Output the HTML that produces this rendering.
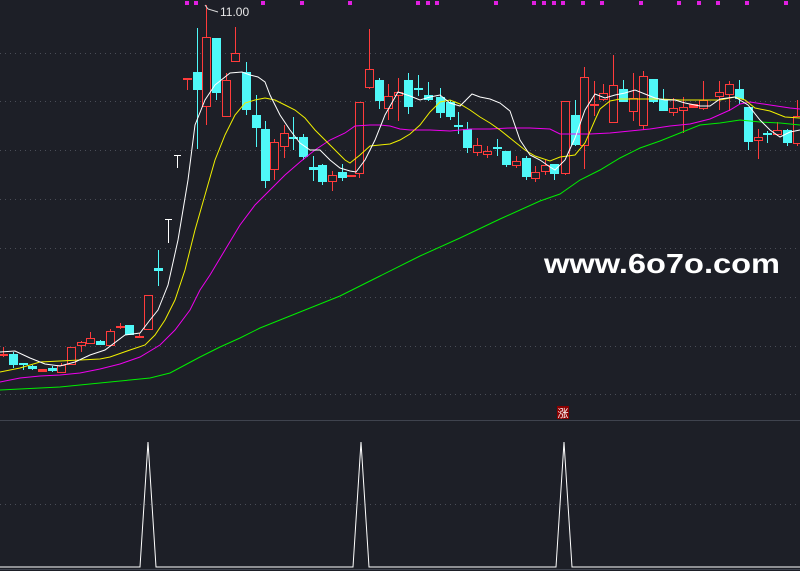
<!DOCTYPE html>
<html><head><meta charset="utf-8"><style>
html,body{margin:0;padding:0;background:#1d1f27;width:800px;height:571px;overflow:hidden}
svg{display:block}
</style></head><body>
<svg id="s" width="800" height="571" viewBox="0 0 800 571" xmlns="http://www.w3.org/2000/svg" shape-rendering="crispEdges">
<rect width="800" height="571" fill="#1d1f27"/>
<g stroke="#4a4d57" stroke-width="1" stroke-dasharray="1,4">
<line x1="0" y1="53.5" x2="800" y2="53.5"/><line x1="0" y1="101.5" x2="800" y2="101.5"/>
<line x1="0" y1="150.5" x2="800" y2="150.5"/><line x1="0" y1="199.5" x2="800" y2="199.5"/>
<line x1="0" y1="248.5" x2="800" y2="248.5"/><line x1="0" y1="297.5" x2="800" y2="297.5"/>
<line x1="0" y1="346.5" x2="800" y2="346.5"/><line x1="0" y1="394.5" x2="800" y2="394.5"/>
<line x1="0" y1="504.5" x2="800" y2="504.5"/>
</g>
<line x1="0" y1="420.5" x2="800" y2="420.5" stroke="#3f434e"/>
<line x1="0" y1="569.5" x2="800" y2="569.5" stroke="#3f434e"/>
<g id="c"></g>
<g fill="none" stroke-width="1" shape-rendering="auto">
<polyline stroke="#00ee00" points="0,390 20,389 60,387 80,385 100,383 130,380 150,378 170,373 185,365 200,357 220,347 240,338 260,328 300,312 340,296 380,276 420,256 460,238 500,219 540,201 560,194 580,180 600,170 620,158 640,148 660,141 680,133 700,125 720,123 740,120 760,122 780,123 800,125"/>
<polyline stroke="#ee00ee" points="0,382 20,378 40,376 60,375 80,373 100,369 120,364 140,357 160,345 175,330 190,310 200,290 210,275 225,250 240,225 255,205 270,190 285,175 300,162 315,150 330,140 345,133 355,126 370,125 380,125 390,126 400,129 410,130 430,130 450,131 470,129 490,129 510,128 530,128 550,129 560,134 570,134 590,134 610,133 630,131 650,129 670,126 690,124 710,119 730,110 740,104 750,102 770,105 790,108 800,109"/>
<polyline stroke="#f0f000" points="0,372 20,368 40,362 60,361 80,360 100,359 110,357 130,350 145,345 155,335 165,320 175,300 185,270 195,230 205,195 215,160 225,135 235,115 245,103 255,100 265,98 275,100 285,105 295,110 305,118 315,130 325,140 335,150 345,160 350,163 360,155 370,146 380,145 390,144 400,140 410,134 420,125 430,112 440,102 450,100 460,104 470,110 480,117 490,123 500,130 515,142 525,150 535,156 550,161 560,157 575,155 585,143 595,120 600,109 610,101 620,99 640,99 660,99 680,100 700,100 720,100 735,97 745,100 755,108 770,111 785,117 800,118"/>
<polyline stroke="#ffffff" points="0,352 15,351 30,358 45,364 60,366 75,362 90,355 105,350 125,335 140,333 150,320 158,310 168,285 178,240 188,180 195,125 205,100 215,85 230,73 242,72 250,75 258,77 265,82 270,95 280,115 290,130 300,143 310,150 320,150 330,160 340,168 350,171 356,172 365,160 375,140 385,115 398,92 410,96 420,100 430,97 440,95 450,103 460,106 472,94 480,97 490,99 500,103 510,111 520,140 530,155 540,160 550,167 555,170 565,160 575,138 585,110 595,94 605,98 615,95 625,93 635,90 645,94 655,98 665,100 675,100 685,103 700,106 710,106 720,99 735,97 748,105 760,120 770,130 780,137 790,132 800,130"/>
</g>
<g fill="#e020e0" id="d"></g>
<g stroke="#fff" fill="none" shape-rendering="auto">
<polyline points="0,567 140,567 148,442 156,567 353,567 361,442 369,567 556,567 564,442 572,567 800,567"/>
</g>
<polyline points="218,12 208,9 205,5" stroke="#ddd" fill="none" shape-rendering="auto"/>
<text x="220" y="16" font-family="Liberation Sans, sans-serif" font-size="12" fill="#e8e8e8">11.00</text>
<text x="544" y="273" font-family="Liberation Sans, sans-serif" font-weight="bold" font-size="28" fill="#ffffff" textLength="236" lengthAdjust="spacingAndGlyphs">www.6o7o.com</text>
<rect x="557" y="406" width="12" height="13" fill="#8b0000"/>
<text x="563" y="417" text-anchor="middle" font-family="Liberation Sans, Noto Sans CJK SC, sans-serif" font-size="11" fill="#fff">涨</text>
</svg>
<script>
var R='#ff3b3b',C='#4ff8f8';
var k=[
[3,354,356,347,357,R,1],[13,354,365,352,368,C,1],[23,363,365,363,370,C,1],[32,366,369,365,370,C,1],[42,369,372,369,372,R,1],[52,368,371,366,372,C,1],[61,365,373,363,373,R,0],[71,347,365,347,365,R,0],[81,342,346,341,352,R,0],[90,338,344,332,344,R,0],[100,341,345,340,345,C,1],[110,331,346,329,346,R,0],[120,326,328,323,329,R,1],[129,325,335,325,335,C,1],[139,336,338,333,338,R,1],[148,295,330,295,330,R,0],[158,268,271,250,286,C,1],
[187,78,80,78,90,R,0],[197,72,90,28,149,C,1],[206,37,107,5,125,R,0],[216,38,93,38,100,C,1],[226,80,117,73,117,R,0],[235,53,62,27,62,R,0],[246,72,110,62,115,C,1],[256,115,128,95,147,C,1],[265,129,181,121,188,C,1],[274,142,170,139,180,R,0],[284,133,147,125,158,R,0],[293,137,139,117,150,C,1],[303,137,157,134,160,C,1],[313,167,170,156,181,C,1],[322,165,182,164,185,C,1],[332,175,182,171,191,R,0],[342,172,178,164,181,C,1],[351,175,177,175,177,R,1],[359,102,174,102,178,R,0],[369,69,88,29,89,R,0],[379,80,101,78,109,C,1],[388,96,109,84,120,R,0],[398,92,96,78,121,R,0],[408,80,107,73,114,C,1],[418,88,90,75,96,C,1],[428,95,100,82,101,C,1],[440,97,113,88,118,C,1],
[450,102,117,100,120,C,1],[458,125,127,112,134,C,1],[467,129,148,122,153,C,1],[477,145,153,138,156,R,0],[487,151,155,146,158,R,0],[497,147,149,139,156,C,1],[506,151,165,151,167,C,1],[516,161,166,156,168,R,0],[526,158,177,156,180,C,1],[535,172,179,166,182,R,0],[545,165,172,160,175,R,0],[554,164,174,164,180,C,1],[565,101,174,101,175,R,0],[575,115,145,100,146,C,1],[584,77,146,67,169,R,0],[594,104,106,81,116,R,1],[603,93,100,84,101,R,0],[613,85,123,55,123,R,0],[623,89,102,80,102,C,1],[633,98,112,73,121,R,0],[643,76,126,71,130,R,0],[653,79,102,79,103,C,1],[663,99,111,89,111,C,1],[673,108,113,98,116,R,0],[683,107,111,97,133,R,0],[693,104,108,104,108,R,1],[703,100,109,81,110,R,0],[719,92,97,81,110,R,0],[729,84,95,81,111,R,0],[739,89,99,80,104,C,1],[748,107,142,107,150,C,1],[758,137,141,129,159,R,0],[767,133,135,131,143,C,1],[777,130,135,122,136,R,0],[787,130,143,129,146,C,1],[797,116,144,100,146,R,0]
];
var g=document.getElementById('c'),h='';
k.forEach(function(a){var x=a[0],c=a[5];
h+='<rect x="'+x+'" y="'+a[3]+'" width="1" height="'+(a[4]-a[3])+'" fill="'+c+'"/>';
var hgt=Math.max(a[2]-a[1],2);
h+='<rect x="'+(x-4)+'" y="'+a[1]+'" width="9" height="'+hgt+'" fill="'+c+'"/>';
if(!a[6]&&hgt>2) h+='<rect x="'+(x-3)+'" y="'+(a[1]+1)+'" width="7" height="'+(hgt-2)+'" fill="#1d1f27"/>';
});
h+='<rect x="168" y="219" width="1" height="24" fill="#fff"/><rect x="165" y="219" width="7" height="1" fill="#fff"/>';
h+='<rect x="177" y="155" width="1" height="13" fill="#fff"/><rect x="174" y="155" width="7" height="1" fill="#fff"/>';
g.innerHTML=h;
var d=[187,196,263,302,350,418,428,437,496,534,544,554,563,583,602,641,679,699,718,747,786],s='';
d.forEach(function(x){s+='<rect x="'+(x-2)+'" y="1" width="4" height="4"/>';});
document.getElementById('d').innerHTML=s;
</script>
</body></html>
